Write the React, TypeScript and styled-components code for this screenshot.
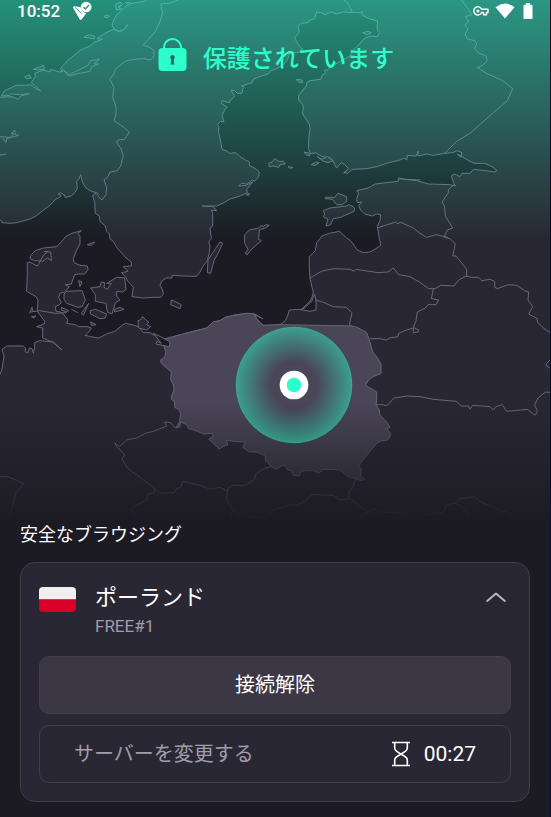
import React from "react";
import styled, { createGlobalStyle } from "styled-components";

const colors = {
  sea: "#1c1a22",
  land: "#292733",
  line: "#6a667a",
  poland: "#4a4658",
  mint: "#2cffcc",
  card: "#292733",
  outline: "#413e4c",
  raised: "#3b3745",
  muted: "#a19dae",
};

const GlobalStyle = createGlobalStyle`
  * { box-sizing: border-box; }
  body {
    margin: 0;
    background: ${colors.sea};
    color: #fff;
    font-family: Roboto, "Noto Sans CJK JP", sans-serif;
  }
`;

const Screen = styled.main`
  min-height: 100vh;
  background: ${colors.sea};
  border-right: 1px solid #0d0b26;
`;

const Hero = styled.section`
  display: grid;
  grid-template-columns: minmax(0, 1fr);
  > * { grid-area: 1 / 1; }
`;

const MapSvg = styled.svg`
  display: block;
  width: 100%;
  height: auto;
`;

const HeroContent = styled.div`
  z-index: 1;
`;

const StatusBar = styled.header`
  display: flex;
  align-items: center;
  height: 22px;
  padding: 0 15px 0 17px;
`;

const Clock = styled.time`
  font-size: 17px;
  font-weight: 500;
  line-height: 20px;
`;

const AppIcon = styled.svg`
  margin-left: 12px;
`;

const StatusIcons = styled.div`
  display: flex;
  align-items: center;
  gap: 6px;
  margin-left: auto;
`;

const Protection = styled.h1`
  display: flex;
  align-items: flex-start;
  justify-content: center;
  gap: 16px;
  margin: 0;
  padding: 16px 0 0 2px;
  color: ${colors.mint};
  font-family: "Noto Sans CJK JP", sans-serif;
  font-size: 24px;
  font-weight: 500;
  line-height: 38px;
`;

const Panel = styled.section`
  padding: 0 20px 14px;
`;

const SectionTitle = styled.h2`
  margin: 0;
  font-size: 18px;
  font-weight: 400;
  line-height: 26px;
`;

const Card = styled.div`
  margin-top: 14px;
  padding: 18px;
  border: 1px solid ${colors.outline};
  border-radius: 15px;
  background: ${colors.card};
`;

const ServerRow = styled.div`
  display: flex;
  align-items: flex-start;
  height: 75px;
`;

const Flag = styled.svg`
  flex: none;
  margin-top: 6px;
`;

const ServerInfo = styled.div`
  flex: 1;
  padding-left: 19px;
`;

const Country = styled.div`
  font-size: 22px;
  line-height: 34px;
`;

const ServerName = styled.div`
  color: ${colors.muted};
  font-size: 17px;
  line-height: 22px;
`;

const IconButton = styled.button`
  display: grid;
  place-items: center;
  width: 30px;
  height: 32px;
  padding: 0;
  border: 0;
  background: none;
  cursor: pointer;
`;

const Action = styled.button<{ $filled?: boolean }>`
  display: flex;
  align-items: center;
  justify-content: ${(p) => (p.$filled ? "center" : "space-between")};
  width: 100%;
  height: 58px;
  padding: 0 34px;
  border: 1px solid ${(p) => (p.$filled ? "#423e4c" : colors.outline)};
  border-radius: 10px;
  background: ${(p) => (p.$filled ? colors.raised : "transparent")};
  color: ${(p) => (p.$filled ? "#fff" : colors.muted)};
  font-family: inherit;
  font-size: 20px;
  line-height: 30px;
  cursor: pointer;
  & + & { margin-top: 11px; }
`;

const Timer = styled.span`
  display: flex;
  align-items: center;
  gap: 13px;
  color: #fff;
  font-size: 21px;
`;

const LAND =
  "M450-8L440 2 412 7 386 12 368 28 350 44 340 62 336 78 345 88 358 94 372 88 383 73 376 85 360 96 340 88 318 98 290 116 308 118 284 126 270 138 242 150 220 168 204 180 190 196 180 208 188 214 178 216 152 208 150 216 130 210 104 220 106 230 94 248 104 256 122 273 108 266 92 254 74 256 48 256 32 264 14 272 4 288 30 286 34 282 62 284 88 281 62 288 54 298 36 290-8 292" +
  "L-8 655 4 662 6 668 30 670 50 668 72 662 92 656 108 648 128 632 144 620 158 608 166 598 180 592 184 586 174 582 182 578 192 584 196 592 214 588 226 576 232 564 230 544 236 538 242 524 248 548 258 564 274 574 290 578 278 586 284 608 286 640 298 648 300 664 316 678 320 694 328 702 330 716 340 724 350 742 364 758 378 774 394 786 394 798 370 800 384 814 364 818 376 830 384 844 400 862 396 890 430 894 458 892 482 892 490 882 488 870 480 856 486 842 500 834 516 834 516 826 552 828 590 829 600 816 608 800 622 782 628 758 630 738 626 726 634 716 630 684 638 678 638 640 634 630 650 632 640 620 606 618 650 618 672 608 688 598 720 588 742 578 740 568 758 546 738 556 716 558 724 550 740 552 758 540 764 544 776 530 778 516 766 506 748 496 748 486 736 480 720 470 708 458 688 460 682 454 666 448 662 426 656 398 656 380 652 374 662 364 672 366 666 346 676 326 682 322 664 310 666 302 688 308 694 298 704 288 696 276 694 270 704 272 712 280 726 280 728 268 732 262 724 258 756 248 760 238 784 228 804 222 812 212 826 208 850 194 862 180 868 162 880 158 894 158 908 148 898 138 884 114 898 96 894 78 904 70 924 68 930 60 944 56 950 36 962 38 976 44 994 36 1010 42 1030 36 1060 38 1082 38 1086 34 1088 46 1112 58 1132 62 1132 92 1138 98 1132 110 1110 108 1092 116 1078 132 1060 150 1050 168 1020 184 1000 196 982 210 974 210 976 220 966 226 962 238 930 242 920 248 920 256 896 286 896 300 910 316 908 342 928 372 930 386 926 420 926 446 932 462 946 458 968 470 992 474 1000 486 1010 504 1024 488 1034 494 1046 506 1032 518 1044 520 1056 508 1100 506 1130 500 1160 490 1200 480 1212 474 1220 480 1222 466 1248 468 1254 454 1254 468 1280 462 1300 466 1334 460 1358 458 1372 452 1386 458 1382 472 1372 462 1410 484 1422 490 1454 490 1476 500 1490 510 1486 516 1458 512 1420 508 1410 520 1386 520 1380 530 1364 522 1354 528 1362 550 1366 558 1350 554" +
  "L1286 552 1250 542 1196 536 1194 544 1126 552 1104 564 1070 572 1076 580 1070 596 1072 608 1086 606 1076 616 1082 630 1094 642 1118 648 1130 642 1142 644 1140 662 1132 680 1142 736 1128 746 1110 756 1090 758 1072 750 1062 736 1052 722 1040 714 1018 694 988 700 966 708 950 728 946 752 928 770 928 800 930 834 936 862 940 876 936 892 930 904 902 930 916 922 936 902 944 882 948 900 948 930 930 934 900 928 868 930 862 950 854 964 840 974 812 976 790 976 778 966 770 956 764 944 788 956 764 942 740 940 700 946 676 952 660 962 640 966 620 984 580 994 520 1010 490 1018 456 1002 450 998 430 998 418 982 404 976 376 970 364 978 344 994 320 1002 296 1014 272 1010 256 1006 266 996 274 984 262 980 236 980 226 974 200 970 204 960 190 942 182 936 168 934 166 920 178 914 184 908 176 892 180 880 194 876 208 860 196 854 214 852 224 824 236 822 254 822 264 808 262 798 240 796 222 788 220 776 230 750 240 732 240 710 234 700 244 692 216 700 196 710 186 724 170 740 130 744 106 752 92 766 90 776 104 782 128 784 142 774 154 782 152 756 132 754 142 756 130 766 112 798 90 786 82 788 82 820 80 874 108 890 114 900 112 934 124 950 134 964 132 972 110 980 128 984 128 1014 142 1020 160 1028 186 1050 160 1026 118 1022 104 1028 104 1044 100 1060 96 1046 88 1044 84 1058 76 1056 76 1044 70 1038 22 1038 6 1048 12 1068 6 1108-8 1140V1580H1660V-8Z";

const POLAND =
  "M490 1018L520 1010 580 994 620 984 640 966 660 962 676 952 700 946 740 940 762 942 770 956 778 966 790 976 840 974 1056 978 1072 982 1100 998 1108 1020 1118 1056 1134 1076 1143 1094 1143 1120 1120 1130 1106 1140 1096 1156 1120 1170 1130 1176 1130 1200 1128 1214 1138 1230 1140 1246 1160 1266 1170 1282 1160 1286 1172 1300 1168 1314 1160 1322 1144 1322 1130 1330 1098 1368 1076 1396 1084 1410 1082 1428 1094 1438 1084 1442 1064 1436 1040 1428 1032 1420 1020 1410 984 1408 970 1408 956 1420 940 1412 918 1412 902 1414 898 1428 880 1426 874 1412 864 1410 852 1394 828 1408 814 1400 796 1382 796 1368 770 1356 748 1356 728 1342 736 1326 700 1324 678 1320 684 1334 672 1338 658 1348 636 1326 626 1318 640 1308 636 1300 612 1302 582 1290 566 1286 560 1274 542 1266 540 1280 528 1284 538 1266 542 1240 536 1228 524 1222 524 1206 514 1198 516 1184 522 1170 520 1152 512 1140 514 1116 484 1090 482 1080 494 1072 498 1056 490 1036Z";

const BORDERS = [
  "M535 0L510 9 482 12 488 40 478 70 468 92 430 135 452 144 462 152 462 168 452 180 430 176 404 178 380 182 360 196 346 208 340 224 330 238 342 262 338 292 348 320 348 344 342 362 366 378 388 396 374 418 354 420 350 428 362 444 370 466 362 498 352 512 330 516 324 530 312 540 320 560 318 584 306 600 296 590 290 578",
  "M1027-4L1044 10 1057 36",
  "M1384-2L1398 18 1416 44 1396 50 1406 66 1394 76 1404 86 1396 102 1400 116 1424 122 1430 132 1424 146 1434 158 1458 168 1462 182 1448 196 1432 203 1460 220 1508 242 1538 266 1522 302 1480 338 1410 400 1370 424 1334 460",
  "M1362 554L1346 568 1344 580 1326 606 1334 620 1336 648 1358 684 1342 690 1332 712 1350 716 1366 732 1358 768 1368 768 1400 808 1400 830",
  "M1132 684L1186 666 1194 672 1200 666 1240 684 1260 700 1280 712 1308 704 1344 712",
  "M930 834L964 814 1000 806 1050 808 1062 814 1068 808 1134 818 1164 816 1180 804 1196 824 1230 830 1258 846 1286 866 1306 866 1322 856 1362 858 1376 840 1398 828 1414 832 1436 832 1446 842 1470 838 1484 844 1484 862 1492 866 1524 854 1550 856 1574 872 1586 876 1584 900 1598 920 1586 942 1612 956 1612 966 1630 984 1660 1004",
  "M946 900L968 906 1000 920 1038 922 1056 938 1048 974 1054 978",
  "M1300 866L1294 896 1316 900 1308 914 1284 914 1276 924 1252 936 1248 962 1240 982 1256 990 1254 996 1240 998 1240 984 1220 990 1196 1000 1194 1010 1168 1014 1160 1020 1140 1016 1110 1016",
  "M1128 1214L1150 1214 1160 1218 1182 1194 1222 1188 1260 1190 1300 1198 1370 1204 1384 1218 1406 1218 1410 1228 1418 1216 1470 1220 1480 1230 1488 1220 1506 1214 1520 1234 1562 1230 1582 1228 1606 1246 1612 1234 1604 1214 1614 1194 1636 1176 1660 1178",
  "M1652 1078L1640 1090 1638 1096 1652 1106",
  "M92 936L120 932 166 940 200 938",
  "M540 1270L526 1284 512 1268 494 1266 500 1278 460 1294 436 1300 410 1314 380 1320 358 1340 344 1328 350 1340 374 1364 366 1378 384 1406 420 1432 460 1462 480 1480 522 1478 530 1466 542 1462 548 1444 600 1456 632 1468 660 1462 682 1474 684 1464 700 1456 736 1456 764 1438 766 1424 794 1404 814 1400",
  "M464 1464L464 1478 442 1484 440 1500 400 1520 392 1528 406 1550",
  "M682 1474L680 1498 698 1530 690 1556M698 1530L740 1550 804 1552 814 1532 830 1528",
  "M1066 1440L1058 1462 1048 1476 1046 1494M830 1526L860 1518 874 1512 888 1518 916 1502 936 1484 1000 1486 1018 1500 1052 1496 1076 1518 1098 1530 1100 1540 1070 1556",
  "M1100 1540L1118 1526 1146 1536 1190 1538 1214 1540 1246 1556 1290 1542 1330 1538 1340 1514 1368 1508 1380 1496 1424 1490 1442 1506 1494 1526 1500 1536 1520 1534 1546 1550 1548 1570M1364 1510Q1392 1514 1408 1560",
  "M0 1430L24 1430 70 1450 68 1456 48 1478 34 1530 26 1560",
];

const ISLANDS = [
  "M272 864L300 860 304 846 314 848 312 862 322 868 334 850 320 850 350 832 374 834 378 868 368 876 350 874 350 888 360 900 346 908 336 942 322 936 318 910 286 904 286 884Z",
  "M192 882L200 874 246 872 256 900 246 920 234 922 200 910 192 898Z",
  "M270 932L286 928 320 942 316 954 300 956 272 942Z",
  "M266 910L250 946 244 940Z",
  "M214 928L234 938 M184 922L206 932 198 936 184 930Z",
  "M236 842L246 846 240 860Z",
  "M344 928L360 922 372 928 344 936Z",
  "M514 900L520 902 544 914 540 926 512 914Z",
  "M262 734L284 726 274 736Z",
  "M414 962L424 958 428 950 440 962 446 966 440 974 452 980 440 990 416 984Z",
  "M734 704L748 690 776 684 784 676 790 680 796 674 808 676 796 684 778 690 776 718 784 722 754 748 742 764 736 760 744 748 734 730Z",
  "M660 726L668 730 654 760 642 782 632 820 622 818 624 780Z",
  "M976 592L1004 592 1014 580 1040 590 1040 604 1026 614 1010 614 998 598 976 596Z",
  "M970 632L990 624 1040 618 1046 614 1056 618 1064 624 1062 634 1022 652 1000 656 992 674 978 678 984 658 970 650 974 642Z",
  "M88 940L96 922 100 936 M94 950L108 948 102 954Z",
  "M272 966L288 974 274 976Z",
];

const SKERRIES = [
  "M346 14L360 6 368 14 354 22 366 26 350 30Z",
  "M378 8L392 8 386 16Z",
  "M314 48Q322 42 328 48 324 56 314 52Z",
  "M252 112Q264 100 284 108L284 116Z",
  "M100 208L130 196 134 208 114 210Z",
  "M74 230L88 224 94 234 78 236Z",
  "M188 208L206 228 238 220 270 214 276 200 296 192 282 192 298 178 272 182 264 196 208 224Z",
  "M-4 410L30 412 42 402 34 400 44 390 46 404 56 406 20 416 18 428 8 414",
  "M-4 466L18 462 M738 584L748 580 746 586Z",
  "M806 490L816 486 824 476 836 484 850 484 856 492 840 494 836 502 820 498 808 500Z",
  "M864 500L878 502 872 506Z",
  "M934 494L946 496 958 488 950 486Z",
  "M912 456L928 460 928 468 918 464Z",
  "M952 470L966 478 982 470 1000 482 984 488 970 484Z",
  "M888 238L906 240 908 248 896 246Z",
  "M1088 98L1104 94 1114 98 1100 104Z",
  "M1194 534L1216 538 1262 540 M1030 520L1040 510",
];

function ConnectionMap() {
  return (
    <MapSvg viewBox="0 0 1650 1566" role="img" aria-label="ポーランド">
      <defs>
        <linearGradient id="glow" x1="0" y1="0" x2="0" y2="720" gradientUnits="userSpaceOnUse">
          <stop offset="0" stopColor={colors.mint} stopOpacity="0.52" />
          <stop offset="1" stopColor={colors.mint} stopOpacity="0" />
        </linearGradient>
        <linearGradient id="fade" x1="0" y1="1200" x2="0" y2="1566" gradientUnits="userSpaceOnUse">
          <stop offset="0" stopColor={colors.sea} stopOpacity="0" />
          <stop offset="0.85" stopColor={colors.sea} stopOpacity="0.8" />
          <stop offset="1" stopColor={colors.sea} />
        </linearGradient>
        <radialGradient id="pulse">
          <stop offset="0.4" stopColor={colors.mint} stopOpacity="0" />
          <stop offset="1" stopColor={colors.mint} stopOpacity="0.48" />
        </radialGradient>
      </defs>
      <g fill={colors.land} stroke={colors.line} strokeWidth="3" strokeLinejoin="round">
        <path d={LAND} />
        {ISLANDS.map((d) => <path key={d} d={d} />)}
        {SKERRIES.map((d) => <path key={d} d={d} />)}
        <path d={POLAND} fill={colors.poland} />
        <path d="M460 1000L482 1010 510 1026 508 1040 468 1032 470 1024 484 1030Z" fill={colors.sea} />
        {BORDERS.map((d) => <path key={d} d={d} fill="none" />)}
      </g>
      <rect width="1650" height="720" fill="url(#glow)" />
      <rect y="1200" width="1650" height="370" fill="url(#fade)" />
      <circle cx="882" cy="1155" r="174" fill="url(#pulse)" stroke={colors.mint} strokeOpacity="0.2" strokeWidth="3" />
      <circle cx="882" cy="1155" r="43" fill="#fff" />
      <circle cx="882" cy="1155" r="22" fill={colors.mint} />
    </MapSvg>
  );
}

export default function App() {
  return (
    <>
      <GlobalStyle />
      <Screen>
        <Hero>
          <ConnectionMap />
          <HeroContent>
            <StatusBar>
              <Clock>10:52</Clock>
              <AppIcon width="20" height="20" viewBox="0 0 20 20" aria-hidden="true">
                <path d="M2.2 5.2 9 6.3Q10 11.2 14.3 12.2L9.8 18.2Q8.5 19.6 7.5 18L1.2 7Q.7 5.2 2.2 5.2Z" fill="#fff" />
                <path d="M3.4 6.4 9.6 12.6" fill="none" stroke="#2c8c79" strokeWidth="0.8" />
                <circle cx="14.2" cy="6" r="5.3" fill="#fff" />
                <path d="m11.5 6 1.9 2 3.6-4" fill="none" stroke="#2c8c79" strokeWidth="1.3" />
              </AppIcon>
              <StatusIcons>
                <svg width="16" height="10" viewBox="0 0 16 10" aria-hidden="true">
                  <path d="M8.6 3.2H15v3.3h-1.5v2.3h-3V6.5H8.6A4.1 4.1 0 1 1 8.6 3.2Z" fill="none" stroke="#fff" strokeWidth="1.4" strokeLinejoin="round" />
                  <circle cx="4.9" cy="4.9" r="1.5" fill="#fff" />
                </svg>
                <svg width="20" height="16" viewBox="0 0 20 16" aria-hidden="true">
                  <path d="M.5 4.2Q10-3 19.5 4.2L10 15.5Z" fill="#fff" />
                </svg>
                <svg width="14" height="16" viewBox="0 0 14 16" aria-hidden="true">
                  <path d="M5 0h4v1.7h1.5q1 0 1 1V15q0 1-1 1h-7q-1 0-1-1V2.7q0-1 1-1H5Z" fill="#fff" />
                </svg>
              </StatusIcons>
            </StatusBar>
            <Protection>
              <svg width="29" height="34" viewBox="0 0 29 34" aria-hidden="true">
                <path d="M6 14V9.5a8.5 8.5 0 0 1 17 0V14" fill="none" stroke="currentColor" strokeWidth="2" />
                <rect x=".5" y="10" width="28" height="23" rx="4" fill="currentColor" />
                <path d="M14.5 17a2.3 2.3 0 0 1 1.4 4.100v4.400q.8.200.8 1h-4.400q0-.800.800-1v-4.400A2.300 2.300 0 0 1 14.500 17Z" fill="#27675f" />
              </svg>
              保護されています
            </Protection>
          </HeroContent>
        </Hero>
        <Panel>
          <SectionTitle>安全なブラウジング</SectionTitle>
          <Card>
            <ServerRow>
              <Flag width="37" height="25" viewBox="0 0 37 25" aria-hidden="true">
                <path d="M0 12.5V4q0-4 4-4h29q4 0 4 4v8.5Z" fill="#f0f0f0" />
                <path d="M0 12.5V21q0 4 4 4h29q4 0 4-4v-8.5Z" fill="#d80027" />
              </Flag>
              <ServerInfo>
                <Country>ポーランド</Country>
                <ServerName>FREE#1</ServerName>
              </ServerInfo>
              <IconButton type="button" aria-label="折りたたむ" aria-expanded="true">
                <svg width="20" height="10" viewBox="0 0 20 10" aria-hidden="true">
                  <path d="m1.2 9 8.8-7.5L18.8 9" fill="none" stroke="#bcb9c8" strokeWidth="1.8" strokeLinecap="round" strokeLinejoin="round" />
                </svg>
              </IconButton>
            </ServerRow>
            <Action type="button" $filled>接続解除</Action>
            <Action type="button">
              サーバーを変更する
              <Timer>
                <svg width="20" height="26" viewBox="0 0 20 26" aria-hidden="true">
                  <path d="M1 1.500h18M1 24.500h18M3.700 1.500V7q0 2 2 3.300l8.600 5.400q2 1.300 2 3.300v5.500M16.300 1.500V7q0 2-2 3.300l-8.600 5.400q-2 1.300-2 3.300v5.500" fill="none" stroke="#fff" strokeWidth="1.6" />
                </svg>
                <time>00:27</time>
              </Timer>
            </Action>
          </Card>
        </Panel>
      </Screen>
    </>
  );
}
